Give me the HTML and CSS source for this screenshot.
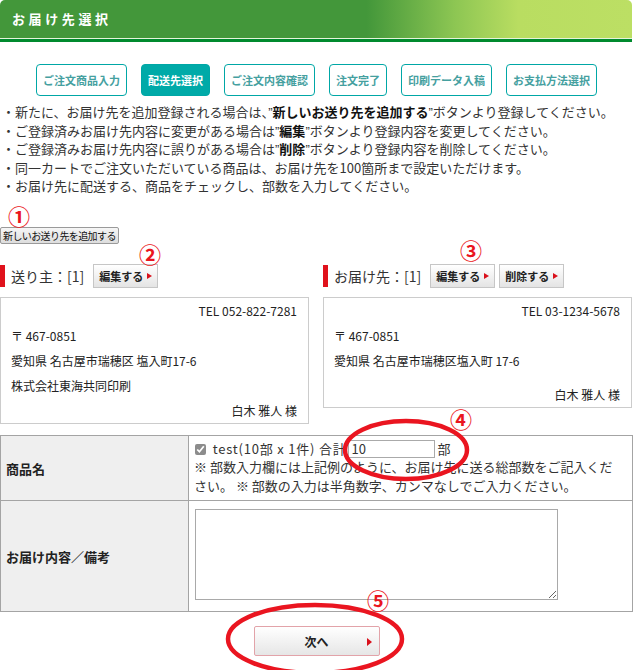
FILE: index.html
```html
<!DOCTYPE html>
<html lang="ja">
<head>
    <meta charset="UTF-8">
    <meta name="viewport" content="width=device-width, initial-scale=1.0">
    <title>お届け先選択</title>
    <link rel="stylesheet" href="styles.css">
</head>
<body>
    <div class="page">
        <div class="title-bar">
            <h2>お届け先選択</h2>
        </div>

        <ul class="steps">
            <li class="step">ご注文商品入力</li>
            <li class="step active">配送先選択</li>
            <li class="step">ご注文内容確認</li>
            <li class="step">注文完了</li>
            <li class="step">印刷データ入稿</li>
            <li class="step">お支払方法選択</li>
        </ul>

        <ul class="notes">
            <li>・新たに、お届け先を追加登録される場合は、<span class="q">”</span><b>新しいお送り先を追加する</b><span class="q">”</span>ボタンより登録してください。</li>
            <li>・ご登録済みお届け先内容に変更がある場合は<span class="q">”</span><b>編集</b><span class="q">”</span>ボタンより登録内容を変更してください。</li>
            <li>・ご登録済みお届け先内容に誤りがある場合は<span class="q">”</span><b>削除</b><span class="q">”</span>ボタンより登録内容を削除してください。</li>
            <li>・同一カートでご注文いただいている商品は、お届け先を100箇所まで設定いただけます。</li>
            <li>・お届け先に配送する、商品をチェックし、部数を入力してください。</li>
        </ul>

        <div class="add-area">
            <span class="mark mark-1">①</span>
            <button class="btn-add">新しいお送り先を追加する</button>
        </div>

        <div class="addr-cols">
            <div class="addr-col">
                <div class="addr-head">
                    <h3>送り主：[1]</h3>
                    <a href="#" class="btn-sub">編集する</a>
                </div>
                <div class="addr-box">
                    <p class="right">TEL 052-822-7281</p>
                    <p>〒 467-0851</p>
                    <p>愛知県 名古屋市瑞穂区 塩入町17-6</p>
                    <p>株式会社東海共同印刷</p>
                    <p class="right">白木 雅人 様</p>
                </div>
            </div>
            <div class="addr-col">
                <div class="addr-head">
                    <h3>お届け先：[1]</h3>
                    <a href="#" class="btn-sub">編集する</a>
                    <a href="#" class="btn-sub">削除する</a>
                </div>
                <div class="addr-box">
                    <p class="right">TEL 03-1234-5678</p>
                    <p>〒 467-0851</p>
                    <p>愛知県 名古屋市瑞穂区塩入町 17-6</p>
                    <p class="right name-gap">白木 雅人 様</p>
                </div>
            </div>
        </div>

        <table class="order-table">
            <tr class="row-item">
                <th>商品名</th>
                <td>
                    <label class="item-label"><input type="checkbox" class="chk" checked> test(10部 x 1件) 合計</label><input type="text" class="qty" value="10"> 部<br>
                    ※ 部数入力欄には上記例のように、お届け先に送る総部数をご記入ください。 ※ 部数の入力は半角数字、カンマなしでご入力ください。
                </td>
            </tr>
            <tr class="row-note">
                <th>お届け内容／備考</th>
                <td><textarea class="memo"></textarea></td>
            </tr>
        </table>

        <div class="next-area">
            <button class="btn-next">次へ</button>
        </div>

        <!-- annotation marks drawn over the page -->
        <span class="mark mark-2">②</span>
        <span class="mark mark-3">③</span>
        <span class="mark mark-4">④</span>
        <span class="mark mark-5">⑤</span>
        <svg class="rings" width="633" height="680" viewBox="0 0 633 680">
            <ellipse cx="406" cy="450" rx="61" ry="29" />
            <ellipse cx="315" cy="639" rx="87" ry="34" />
        </svg>
    </div>
</body>
</html>
```

FILE: styles.css
```css
body {
    margin: 0;
    padding: 0;
    font-family: "Noto Sans CJK JP", "Noto Sans", sans-serif;
    font-size: 13px;
    color: #333;
    background-color: #fff;
    overflow: hidden;
}

.page {
    position: relative;
    width: 633px;
    height: 670px;
}

/* title */
.title-bar {
    width: 632px;
    height: 38px;
    border-radius: 5px 5px 0 0;
    background: linear-gradient(to right, #43973a 0%, #43973a 58%, #8dc653 72%, #b9dd61 82%, #bcdf64 100%);
    border-bottom: 1px solid #e4f4da;
    box-shadow: 0 3px 0 #008a2e;
}

.title-bar h2 {
    margin: 0;
    padding-left: 12px;
    line-height: 38px;
    font-size: 13px;
    font-weight: bold;
    letter-spacing: 3.6px;
    color: #fff;
}

/* steps */
.steps {
    display: flex;
    justify-content: center;
    gap: 14px;
    list-style: none;
    margin: 25px 0 0;
    padding: 0;
}

.step {
    height: 30px;
    line-height: 30px;
    padding: 0 6px;
    border: 1px solid #00a7a6;
    border-radius: 4px;
    font-size: 11px;
    font-weight: bold;
    color: #45a09f;
    white-space: nowrap;
}

.step.active {
    background-color: #00aaa8;
    color: #fff;
}

/* notes */
.notes {
    list-style: none;
    margin: 7px 0 0;
    padding: 0 0 0 2px;
    line-height: 18.6px;
    white-space: nowrap;
}

.notes li {
    height: 18.6px;
}

.notes b {
    color: #111;
}

.q {
    font-family: "Liberation Sans", sans-serif;
    line-height: 1;
}

/* add button */
.add-area {
    margin-top: 8px;
}

.mark {
    display: block;
    width: 24px;
    height: 22px;
    line-height: 22px;
    font-size: 22px;
    font-weight: bold;
    color: #ea1520;
}

.mark-1 {
    margin-left: 8px;
}

.btn-add {
    display: block;
    margin-top: 1px;
    height: 17px;
    padding: 0 2px;
    border: 1px solid #9a9a9a;
    border-radius: 2px;
    background: linear-gradient(#f6f6f6, #dddddd);
    font-family: inherit;
    font-size: 10px;
    line-height: 15px;
    color: #111;
    letter-spacing: -0.6px;
}

.mark-2, .mark-3, .mark-4, .mark-5 {
    position: absolute;
}

.mark-2 { left: 139px; top: 242px; }
.mark-3 { left: 460px; top: 238px; }
.mark-4 { left: 450px; top: 407px; }
.mark-5 { left: 367px; top: 588px; }

/* addresses */
.addr-cols {
    display: flex;
    gap: 14px;
    margin-top: 20px;
    align-items: flex-start;
}

.addr-col {
    width: 309px;
}

.addr-head {
    display: flex;
    align-items: center;
    height: 24px;
}

.addr-head h3 {
    margin: 0 9px 0 0;
    height: 22px;
    padding-left: 6px;
    border-left: 5px solid #e0121c;
    font-size: 14px;
    font-weight: normal;
    line-height: 22px;
    color: #333;
}

.btn-sub {
    position: relative;
    display: inline-block;
    height: 22px;
    line-height: 22px;
    padding: 0 14px 0 5px;
    margin-right: 4px;
    border: 1px solid #c6c6c6;
    background: linear-gradient(#ffffff, #e4e4e4);
    font-size: 11px;
    font-weight: bold;
    color: #222;
    text-decoration: none;
}

.btn-sub::after {
    content: "";
    position: absolute;
    right: 5px;
    top: 8px;
    border-left: 5px solid #d9101b;
    border-top: 3.5px solid transparent;
    border-bottom: 3.5px solid transparent;
}

.addr-box {
    margin-top: 9px;
    border: 1px solid #cccccc;
    padding: 0 11px 0 10px;
    font-size: 12px;
}

.addr-box p {
    margin: 0;
    line-height: 25px;
    color: #222;
}

.addr-box .right {
    text-align: right;
}

.addr-box .name-gap {
    margin-top: 9px;
}

/* order table */
.order-table {
    width: 633px;
    margin-top: 11px;
    border-collapse: collapse;
}

.order-table th, .order-table td {
    border: 1px solid #a4a4a4;
    padding: 5px;
    vertical-align: middle;
}

.order-table th {
    width: 177px;
    background-color: #efefef;
    text-align: left;
    font-size: 13px;
    font-weight: bold;
    color: #222;
}

.row-item td {
    height: 52px;
    line-height: 18.5px;
    padding: 4px 12px 5px 5px;
}

.item-label {
    letter-spacing: 0.8px;
}

.chk {
    width: 11px;
    height: 11px;
    margin: 0 3px 0 1px;
    vertical-align: -1px;
    accent-color: #8c8c8c;
}

.qty {
    box-sizing: border-box;
    width: 87px;
    height: 18px;
    padding: 0 3px;
    margin: 0 0 0 1px;
    border: 1px solid #aaaaaa;
    font-family: inherit;
    font-size: 13px;
    line-height: 16px;
    color: #333;
    vertical-align: top;
}

.row-note td {
    height: 94px;
    padding: 6px 5px 10px 6px;
}

.memo {
    display: block;
    width: 359px;
    height: 87px;
    padding: 1px;
    border: 1px solid #a9a9a9;
    resize: both;
}

/* next */
.next-area {
    display: flex;
    justify-content: center;
    margin-top: 14px;
}

.btn-next {
    position: relative;
    width: 126px;
    height: 30px;
    border: 1px solid #e2a3a9;
    border-radius: 2px;
    background: linear-gradient(#ffffff, #e6e6e6);
    font-family: inherit;
    font-size: 12px;
    font-weight: bold;
    color: #222;
}

.btn-next::after {
    content: "";
    position: absolute;
    right: 7px;
    top: 11px;
    border-left: 5px solid #d9101b;
    border-top: 4px solid transparent;
    border-bottom: 4px solid transparent;
}

.rings {
    position: absolute;
    left: 0;
    top: 0;
    pointer-events: none;
}

.rings ellipse {
    fill: none;
    stroke: #ea1520;
    stroke-width: 4.5;
}
```
